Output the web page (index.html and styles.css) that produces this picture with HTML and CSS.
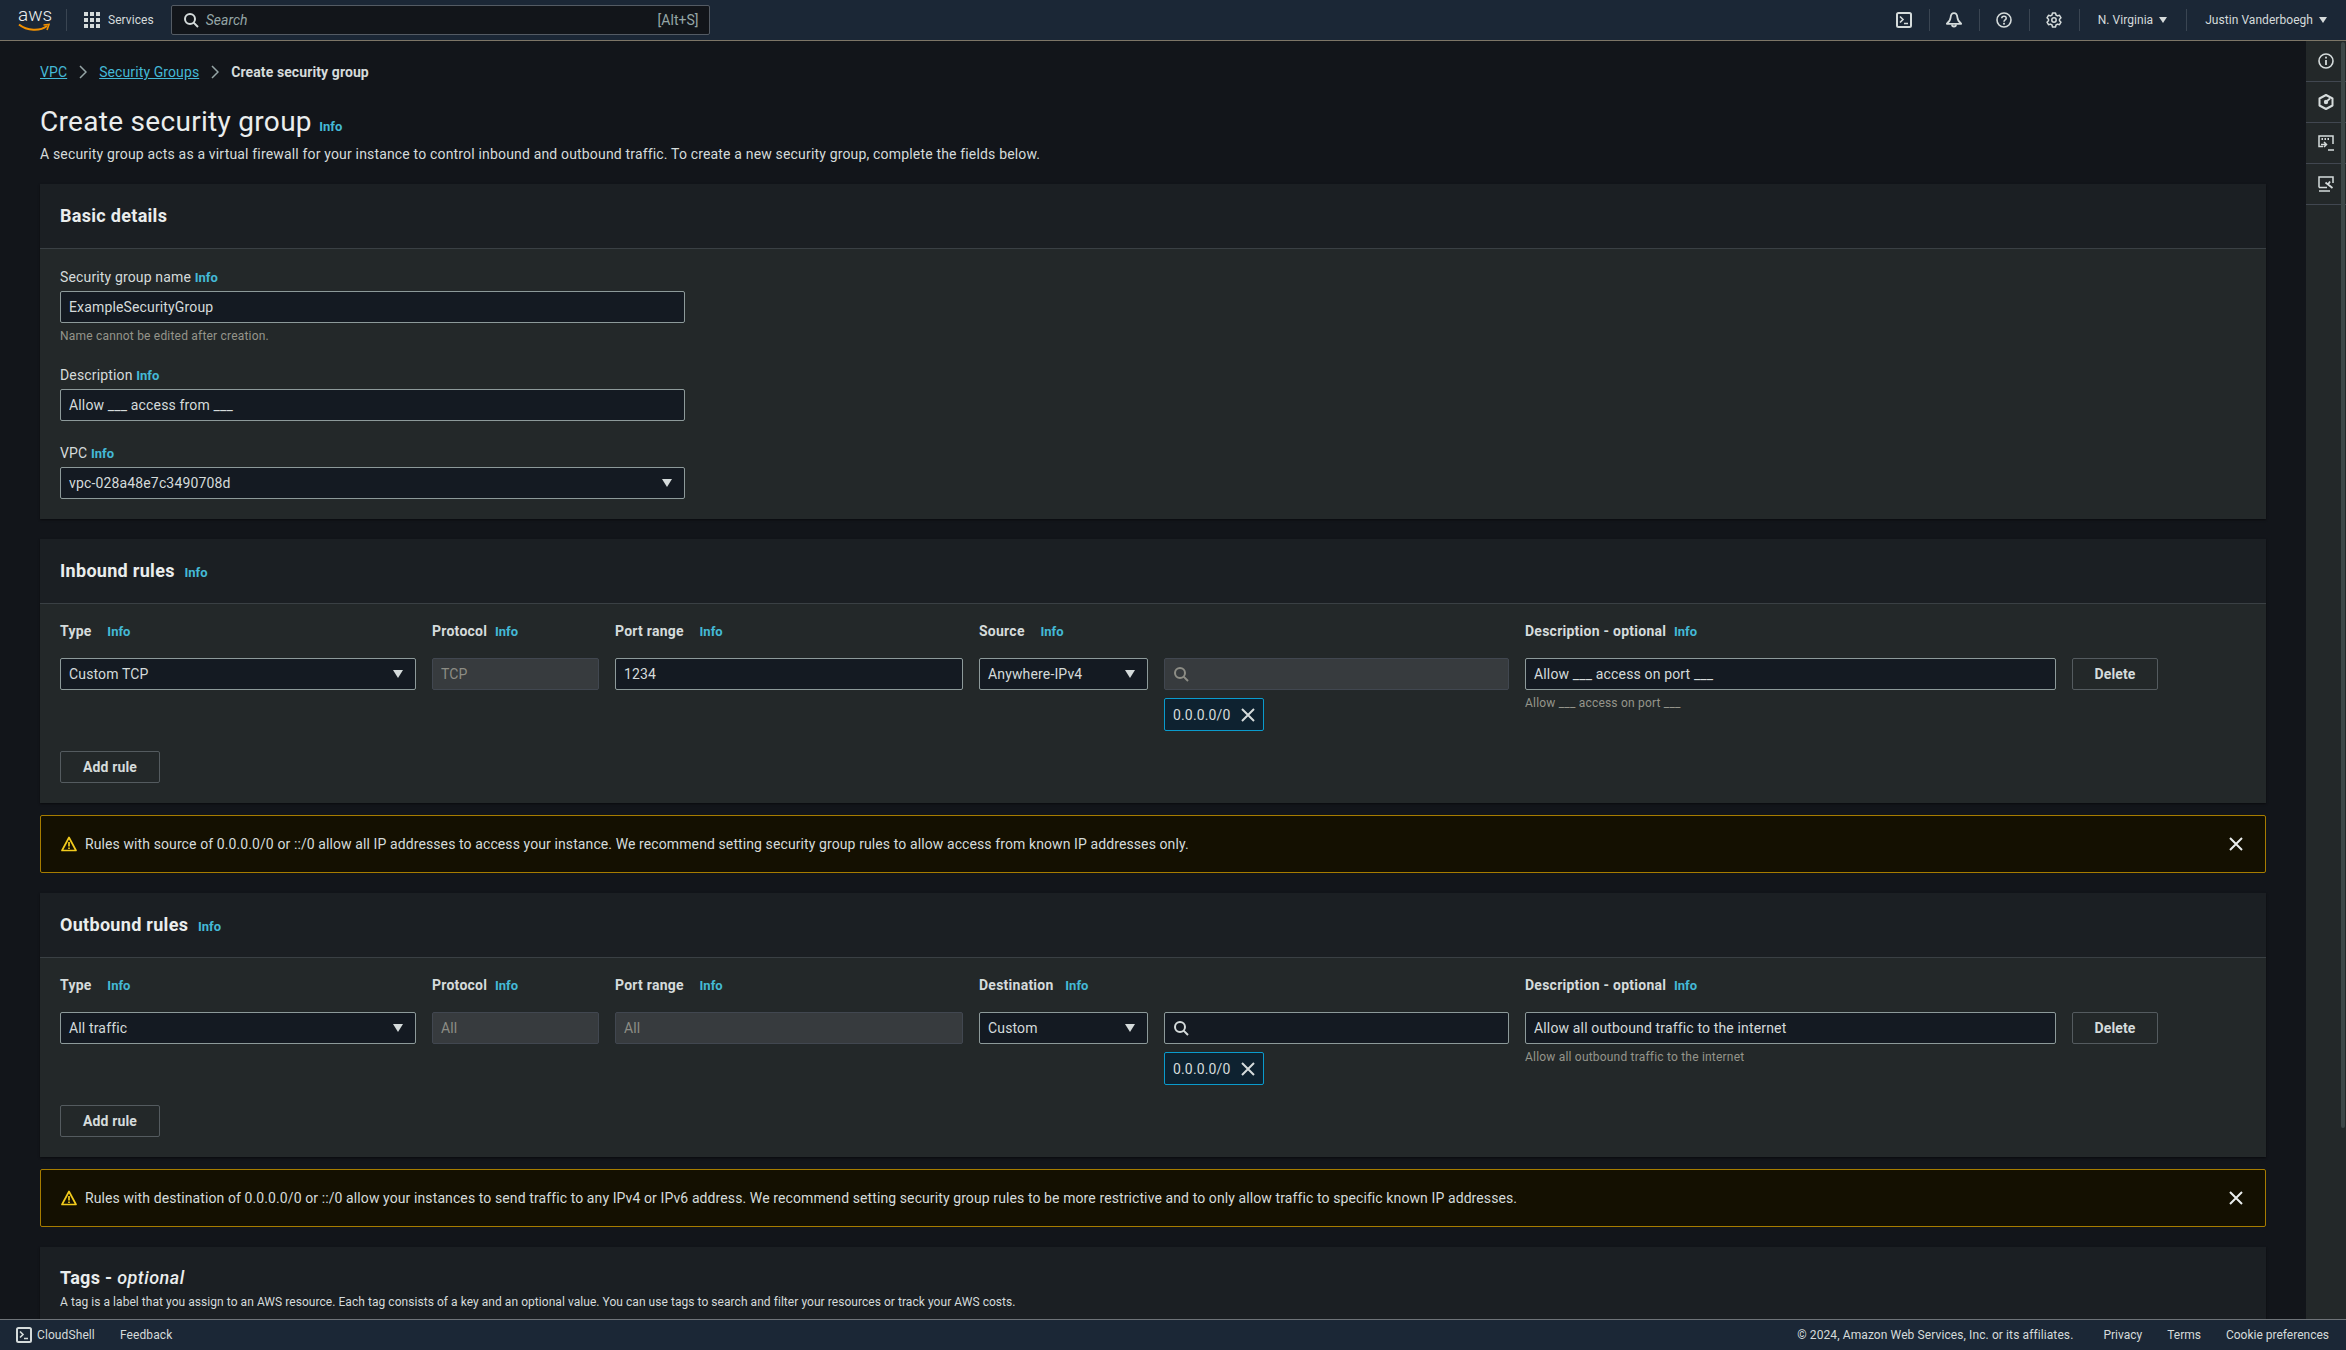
FILE: index.html
```html
<!DOCTYPE html>
<html lang="en">
<head>
<meta charset="UTF-8">
<meta name="viewport" content="width=device-width, initial-scale=1.0">
<title>Create security group</title>
<link rel="stylesheet" href="styles.css">
</head>
<body>

<svg class="defs" width="0" height="0">
  <symbol id="i-search" viewBox="0 0 16 16"><circle cx="7" cy="7" r="5" fill="none" stroke="currentColor" stroke-width="2"/><path d="M10.6 10.6 15 15" fill="none" stroke="currentColor" stroke-width="2"/></symbol>
  <symbol id="i-close" viewBox="0 0 16 16"><path d="M2 2l12 12M14 2 2 14" fill="none" stroke="currentColor" stroke-width="2"/></symbol>
  <symbol id="i-shell" viewBox="0 0 16 16"><rect x="1" y="1" width="14" height="14" rx="1.5" fill="none" stroke="currentColor" stroke-width="2"/><path d="M4 4.5 7 7.5 4 10.5M8 11.5h4" fill="none" stroke="currentColor" stroke-width="1.6"/></symbol>
  <symbol id="i-warn" viewBox="0 0 16 16"><path d="M8 1.5 15 14.5H1Z" fill="none" stroke="currentColor" stroke-width="1.7" stroke-linejoin="round"/><path d="M8 6v4.5M8 11.5v1.6" fill="none" stroke="currentColor" stroke-width="1.7"/></symbol>
</svg>

<header class="topbar">
  <div class="logo">
    <span class="logo-text">aws</span>
    <svg class="logo-smile" viewBox="0 0 32 10"><path d="M1 1.5C9 8 22 8.500 29 3" fill="none" stroke="#f29100" stroke-width="2"/><path d="M25.500 2 31 1.500 29 7" fill="none" stroke="#f29100" stroke-width="1.600"/></svg>
  </div>
  <span class="divider logo-divider"></span>
  <div class="services">
    <svg class="grid-icon" viewBox="0 0 16 16" fill="currentColor">
      <rect width="4" height="4"/><rect x="6" width="4" height="4"/><rect x="12" width="4" height="4"/>
      <rect y="6" width="4" height="4"/><rect x="6" y="6" width="4" height="4"/><rect x="12" y="6" width="4" height="4"/>
      <rect y="12" width="4" height="4"/><rect x="6" y="12" width="4" height="4"/><rect x="12" y="12" width="4" height="4"/>
    </svg>
    <span>Services</span>
  </div>
  <div class="searchbar">
    <svg class="icon"><use href="#i-search"/></svg>
    <span class="searchbar-text">Search</span>
    <span class="searchbar-key">[Alt+S]</span>
  </div>
  <div class="topbar-right">
    <span class="top-icon"><svg class="icon"><use href="#i-shell"/></svg></span>
    <span class="divider"></span>
    <span class="top-icon">
      <svg class="icon" viewBox="0 0 16 16"><path d="M8 1.200C5.800 1.200 4.800 3.200 4.600 5.500 4.400 8 3 10 .8 11.800h14.400C13 10 11.600 8 11.400 5.500 11.200 3.200 10.200 1.200 8 1.200Z" fill="none" stroke="currentColor" stroke-width="1.800" stroke-linejoin="round"/><path d="M6 12.500a2 2 0 0 0 4 0" fill="none" stroke="currentColor" stroke-width="1.800"/></svg>
    </span>
    <span class="divider"></span>
    <span class="top-icon">
      <svg class="icon" viewBox="0 0 16 16"><circle cx="8" cy="8" r="7" fill="none" stroke="currentColor" stroke-width="1.600"/><path d="M5.800 6.300C5.800 3.600 10.200 3.600 10.200 6.200 10.200 7.900 8 7.900 8 9.700" fill="none" stroke="currentColor" stroke-width="1.600"/><rect x="7.100" y="10.800" width="1.800" height="1.800" fill="currentColor"/></svg>
    </span>
    <span class="divider"></span>
    <span class="top-icon">
      <svg class="icon" viewBox="0 0 16 16"><path d="M6.500 1h3l.5 2 1.500.9 2-.6 1.500 2.500-1.500 1.500v1.400l1.500 1.500-1.500 2.500-2-.6-1.500.9-.5 2h-3l-.5-2-1.500-.9-2 .6L1 10.200l1.500-1.500V7.300L1 5.800l1.500-2.500 2 .6L6 3Z" fill="none" stroke="currentColor" stroke-width="1.500" stroke-linejoin="round"/><circle cx="8" cy="8" r="2.200" fill="none" stroke="currentColor" stroke-width="1.500"/></svg>
    </span>
    <span class="divider"></span>
    <span class="top-menu">N. Virginia <i class="caret"></i></span>
    <span class="divider"></span>
    <span class="top-menu">Justin Vanderboegh <i class="caret"></i></span>
  </div>
</header>

<div class="middle">
  <main class="content">
    <nav class="breadcrumbs">
      <a href="#">VPC</a>
      <svg class="crumb-sep" viewBox="0 0 8 14"><path d="M1 1l6 6-6 6" fill="none" stroke="currentColor" stroke-width="1.500"/></svg>
      <a href="#">Security Groups</a>
      <svg class="crumb-sep" viewBox="0 0 8 14"><path d="M1 1l6 6-6 6" fill="none" stroke="currentColor" stroke-width="1.500"/></svg>
      <strong>Create security group</strong>
    </nav>

    <h1>Create security group <a class="info" href="#">Info</a></h1>
    <p class="page-desc">A security group acts as a virtual firewall for your instance to control inbound and outbound traffic. To create a new security group, complete the fields below.</p>

    <section class="card">
      <div class="card-head"><h2>Basic details</h2></div>
      <div class="card-body basic">
        <div class="field">
          <label>Security group name <a class="info" href="#">Info</a></label>
          <input class="input" type="text" value="ExampleSecurityGroup">
          <div class="hint">Name cannot be edited after creation.</div>
        </div>
        <div class="field">
          <label>Description <a class="info" href="#">Info</a></label>
          <input class="input" type="text" value="Allow ___ access from ___">
        </div>
        <div class="field">
          <label>VPC <a class="info" href="#">Info</a></label>
          <div class="select">vpc-028a48e7c3490708d<i class="caret"></i></div>
        </div>
      </div>
    </section>

    <section class="card">
      <div class="card-head"><h2>Inbound rules <a class="info" href="#">Info</a></h2></div>
      <div class="card-body">
        <div class="rule-grid">
          <div class="rule-label">Type <a class="info far" href="#">Info</a></div>
          <div class="rule-label">Protocol <a class="info" href="#">Info</a></div>
          <div class="rule-label">Port range <a class="info far" href="#">Info</a></div>
          <div class="rule-label span2">Source <a class="info far" href="#">Info</a></div>
          <div class="rule-label span2">Description - optional <a class="info" href="#">Info</a></div>

          <div class="select">Custom TCP<i class="caret"></i></div>
          <input class="input" type="text" value="TCP" disabled>
          <input class="input" type="text" value="1234">
          <div class="select">Anywhere-IPv4<i class="caret"></i></div>
          <div>
            <div class="cidr-search disabled"><svg class="icon"><use href="#i-search"/></svg></div>
            <div class="chip">0.0.0.0/0 <svg class="icon"><use href="#i-close"/></svg></div>
          </div>
          <div>
            <input class="input" type="text" value="Allow ___ access on port ___">
            <div class="hint">Allow ___ access on port ___</div>
          </div>
          <button class="btn">Delete</button>
        </div>
        <button class="btn add-rule">Add rule</button>
      </div>
    </section>

    <div class="alert">
      <svg class="icon alert-icon"><use href="#i-warn"/></svg>
      <span>Rules with source of 0.0.0.0/0 or ::/0 allow all IP addresses to access your instance. We recommend setting security group rules to allow access from known IP addresses only.</span>
      <svg class="icon alert-close"><use href="#i-close"/></svg>
    </div>

    <section class="card">
      <div class="card-head"><h2>Outbound rules <a class="info" href="#">Info</a></h2></div>
      <div class="card-body">
        <div class="rule-grid">
          <div class="rule-label">Type <a class="info far" href="#">Info</a></div>
          <div class="rule-label">Protocol <a class="info" href="#">Info</a></div>
          <div class="rule-label">Port range <a class="info far" href="#">Info</a></div>
          <div class="rule-label span2">Destination <a class="info mid" href="#">Info</a></div>
          <div class="rule-label span2">Description - optional <a class="info" href="#">Info</a></div>

          <div class="select">All traffic<i class="caret"></i></div>
          <input class="input" type="text" value="All" disabled>
          <input class="input" type="text" value="All" disabled>
          <div class="select">Custom<i class="caret"></i></div>
          <div>
            <div class="cidr-search"><svg class="icon"><use href="#i-search"/></svg></div>
            <div class="chip">0.0.0.0/0 <svg class="icon"><use href="#i-close"/></svg></div>
          </div>
          <div>
            <input class="input" type="text" value="Allow all outbound traffic to the internet">
            <div class="hint">Allow all outbound traffic to the internet</div>
          </div>
          <button class="btn">Delete</button>
        </div>
        <button class="btn add-rule">Add rule</button>
      </div>
    </section>

    <div class="alert">
      <svg class="icon alert-icon"><use href="#i-warn"/></svg>
      <span>Rules with destination of 0.0.0.0/0 or ::/0 allow your instances to send traffic to any IPv4 or IPv6 address. We recommend setting security group rules to be more restrictive and to only allow traffic to specific known IP addresses.</span>
      <svg class="icon alert-close"><use href="#i-close"/></svg>
    </div>

    <section class="card tags">
      <h2>Tags - <em>optional</em></h2>
      <p>A tag is a label that you assign to an AWS resource. Each tag consists of a key and an optional value. You can use tags to search and filter your resources or track your AWS costs.</p>
    </section>
  </main>

  <aside class="side-panel">
    <div class="side-item">
      <svg class="icon" viewBox="0 0 16 16"><circle cx="8" cy="8" r="7" fill="none" stroke="currentColor" stroke-width="1.600"/><path d="M8 7v5" stroke="currentColor" stroke-width="1.800"/><rect x="7.100" y="3.700" width="1.800" height="1.800" fill="currentColor"/></svg>
    </div>
    <div class="side-item">
      <svg class="icon" viewBox="0 0 16 16"><path d="M8 1 14.500 4.500v7L8 15 1.500 11.500v-7Z" fill="none" stroke="currentColor" stroke-width="2" stroke-linejoin="round"/><circle cx="8" cy="8" r="2.200" fill="currentColor"/><path d="M9 7 12 4.500" stroke="currentColor" stroke-width="1.800"/></svg>
    </div>
    <div class="side-item">
      <svg class="icon" viewBox="0 0 16 16"><path d="M5 11.500H1V1h14v8" fill="none" stroke="currentColor" stroke-width="1.500"/><path d="M3.500 4h1.500M6.500 4h1.500M9.500 4h1.500" stroke="currentColor" stroke-width="1.800"/><path d="M3 9.500h5M6 7l2.500 2.500L6 12M10 15h6" fill="none" stroke="currentColor" stroke-width="1.500"/></svg>
    </div>
    <div class="side-item">
      <svg class="icon" viewBox="0 0 16 16"><path d="M1 11.500V1h14v6M1 11.500h8" fill="none" stroke="currentColor" stroke-width="1.500"/><path d="M1 15h11" stroke="currentColor" stroke-width="1.500"/><path d="M7.500 6.500 14.500 12M10 8.500l2-3" fill="none" stroke="currentColor" stroke-width="1.800"/></svg>
    </div>
    <div class="scroll-thumb"></div>
  </aside>
</div>

<footer class="footer">
  <span class="foot-shell"><svg class="icon"><use href="#i-shell"/></svg>CloudShell</span>
  <span class="foot-feedback">Feedback</span>
  <span class="foot-copy">© 2024, Amazon Web Services, Inc. or its affiliates.</span>
  <span class="foot-link">Privacy</span>
  <span class="foot-link">Terms</span>
  <span class="foot-link">Cookie preferences</span>
</footer>

</body>
</html>
```

FILE: styles.css
```css
* {
  box-sizing: border-box;
}
html, body {
  height: 100%;
  overflow: hidden;
}
body {
  margin: 0;
  display: flex;
  flex-direction: column;
  font-family: Roboto, "Liberation Sans", sans-serif;
  font-size: 14px;
  line-height: 20px;
  letter-spacing: 0.15px;
  color: #d5dbdb;
  background-color: #12151a;
}
.defs {
  position: absolute;
}
a {
  color: #44b9d6;
}
.icon {
  display: block;
  width: 16px;
  height: 16px;
  flex: none;
}
.caret {
  display: inline-block;
  width: 0;
  height: 0;
  border-left: 5px solid transparent;
  border-right: 5px solid transparent;
  border-top: 8px solid #d5dbdb;
}

/* top bar */
.topbar {
  display: flex;
  align-items: center;
  flex: none;
  height: 41px;
  padding-left: 18px;
  background-color: #1b2736;
  border-bottom: 1px solid #7d7667;
  font-size: 12px;
  color: #d5dbdb;
}
.divider {
  width: 1px;
  height: 22px;
  background-color: #3a4552;
}
.logo {
  width: 32px;
  height: 30px;
  position: relative;
  color: #eaeded;
}
.logo-text {
  display: block;
  font-size: 19px;
  font-weight: 300;
  line-height: 20px;
  letter-spacing: 0;
  text-align: center;
}
.logo-smile {
  position: absolute;
  left: 0;
  top: 18px;
  width: 32px;
  height: 10px;
}
.logo-divider {
  margin-left: 16px;
}
.services {
  display: flex;
  align-items: center;
  gap: 8px;
  margin-left: 17px;
  letter-spacing: 0.05px;
}
.grid-icon {
  width: 16px;
  height: 16px;
}
.searchbar {
  display: flex;
  align-items: center;
  width: 539px;
  height: 30px;
  margin-left: 17px;
  padding: 0 10px 0 11px;
  background-color: #12151a;
  border: 1px solid #545b64;
  border-radius: 2px;
  font-size: 14px;
  letter-spacing: 0.05px;
  color: #95a5a6;
}
.searchbar .icon {
  color: #d5dbdb;
}
.searchbar-text {
  margin-left: 7px;
  font-style: italic;
  flex: 1;
}
.topbar-right {
  display: flex;
  align-items: center;
  margin-left: auto;
}
.top-icon {
  display: flex;
  justify-content: center;
  width: 49px;
}
.top-menu {
  display: flex;
  align-items: center;
  gap: 6px;
  padding: 0 19px 0 18px;
  letter-spacing: 0.05px;
  white-space: nowrap;
}
.top-menu .caret {
  border-left-width: 4px;
  border-right-width: 4px;
  border-top-width: 6px;
}

/* page */
.middle {
  display: flex;
  flex: 1;
  min-height: 0;
}
.content {
  flex: 1;
  min-width: 0;
  overflow: hidden;
  padding: 21px 40px 0;
}
.breadcrumbs {
  display: flex;
  align-items: center;
  gap: 12px;
  height: 20px;
  letter-spacing: 0.1px;
}
.crumb-sep {
  width: 8px;
  height: 14px;
  color: #95a5a6;
}
h1 {
  margin: 22px 0 4px;
  font-size: 28px;
  line-height: 36px;
  font-weight: 400;
  letter-spacing: 0.3px;
  color: #eaeded;
}
.info {
  font-size: 13px;
  font-weight: 700;
  line-height: 1;
  letter-spacing: 0;
  text-decoration: none;
}
.page-desc {
  margin: 0 0 20px;
  letter-spacing: 0.17px;
}

/* cards */
.card {
  margin-bottom: 20px;
  background-color: #232829;
  box-shadow: 0 1px 2px rgba(0, 0, 0, 0.5);
}
.card-head {
  display: flex;
  align-items: center;
  height: 65px;
  padding: 0 20px;
  background-color: #1b1f23;
  border-bottom: 1px solid #3a4044;
}
h2 {
  margin: 0;
  font-size: 18px;
  line-height: 24px;
  font-weight: 700;
  letter-spacing: 0.3px;
  color: #eaeded;
}
h2 .info {
  margin-left: 5px;
}
.card-body {
  padding: 17px 20px 20px;
}
.basic {
  padding-top: 18px;
}
.field {
  width: 625px;
  margin-bottom: 22px;
}
.field:last-child {
  margin-bottom: 0;
}
.field label {
  display: block;
  margin-bottom: 4px;
}
.input,
.select,
.cidr-search {
  display: flex;
  align-items: center;
  width: 100%;
  height: 32px;
  padding: 0 8px;
  background-color: #141a22;
  border: 1px solid #8d9a9a;
  border-radius: 2px;
  font-family: inherit;
  font-size: 14px;
  letter-spacing: inherit;
  color: #d5dbdb;
}
.select {
  justify-content: space-between;
  padding-right: 12px;
}
.input:disabled,
.cidr-search.disabled {
  background-color: #373b3e;
  border-color: #414750;
  color: #8d8d85;
}
.hint {
  margin: 5px 0 -1px;
  font-size: 12px;
  line-height: 16px;
  letter-spacing: 0.2px;
  color: #95958b;
}

/* rule rows */
.rule-grid {
  display: grid;
  grid-template-columns: 356px 167px 348px 169px 345px 531px 86px;
  column-gap: 16px;
  row-gap: 17px;
  align-items: start;
}
.rule-label {
  font-weight: 700;
  letter-spacing: 0.25px;
}
.rule-label .info {
  margin-left: 4px;
}
.rule-label .info.far {
  margin-left: 12px;
}
.rule-label .info.mid {
  margin-left: 8px;
}
.span2 {
  grid-column: span 2;
}
.chip {
  display: inline-flex;
  align-items: center;
  gap: 9px;
  height: 33px;
  margin-top: 8px;
  padding: 0 7px 0 8px;
  background-color: #0e2230;
  border: 1px solid #0a9bcc;
  border-radius: 2px;
}
.btn {
  height: 32px;
  padding: 0;
  width: 86px;
  background-color: transparent;
  border: 1px solid #545b5f;
  border-radius: 2px;
  font-family: inherit;
  font-size: 14px;
  font-weight: 700;
  letter-spacing: inherit;
  color: #d5dbdb;
}
.add-rule {
  display: block;
  width: 100px;
  margin-top: 20px;
}

/* warnings */
.alert {
  display: flex;
  align-items: center;
  height: 58px;
  margin: -8px 0 20px;
  padding: 0 20px;
  background-color: #141001;
  border: 1px solid #a67c00;
  border-radius: 2px;
  letter-spacing: 0.1px;
}
.alert-icon {
  color: #f2cb1d;
  margin-right: 8px;
}
.alert-close {
  margin-left: auto;
  margin-right: 1px;
  color: #eaeded;
}

.tags {
  height: 100px;
  padding: 19px 20px;
  background-color: #1b1f23;
}
.tags h2 em {
  font-weight: 500;
  letter-spacing: 0.5px;
}
.tags p {
  margin: 4px 0 0;
  font-size: 12px;
  line-height: 16px;
  letter-spacing: 0.05px;
}

/* side panel */
.side-panel {
  position: relative;
  flex: none;
  width: 40px;
  background-color: #232829;
}
.side-item {
  display: flex;
  justify-content: center;
  align-items: center;
  width: 40px;
  height: 41px;
  border-bottom: 1px solid #414750;
}
.side-item:last-of-type {
  border-bottom: none;
}
.scroll-thumb {
  position: absolute;
  top: 1px;
  right: 1px;
  width: 4px;
  height: 1086px;
  border-radius: 2px;
  background-color: #3d4647;
}

/* footer */
.footer {
  display: flex;
  align-items: center;
  flex: none;
  height: 31px;
  padding: 0 17px 0 16px;
  background-color: #1b2736;
  border-top: 1px solid #6e7378;
  font-size: 12px;
  letter-spacing: 0.1px;
}
.foot-shell {
  display: flex;
  align-items: center;
  gap: 5px;
}
.foot-feedback {
  margin-left: 25px;
}
.foot-copy {
  margin-left: auto;
  margin-right: 5px;
}
.foot-link {
  margin-left: 25px;
  letter-spacing: 0;
}
```
